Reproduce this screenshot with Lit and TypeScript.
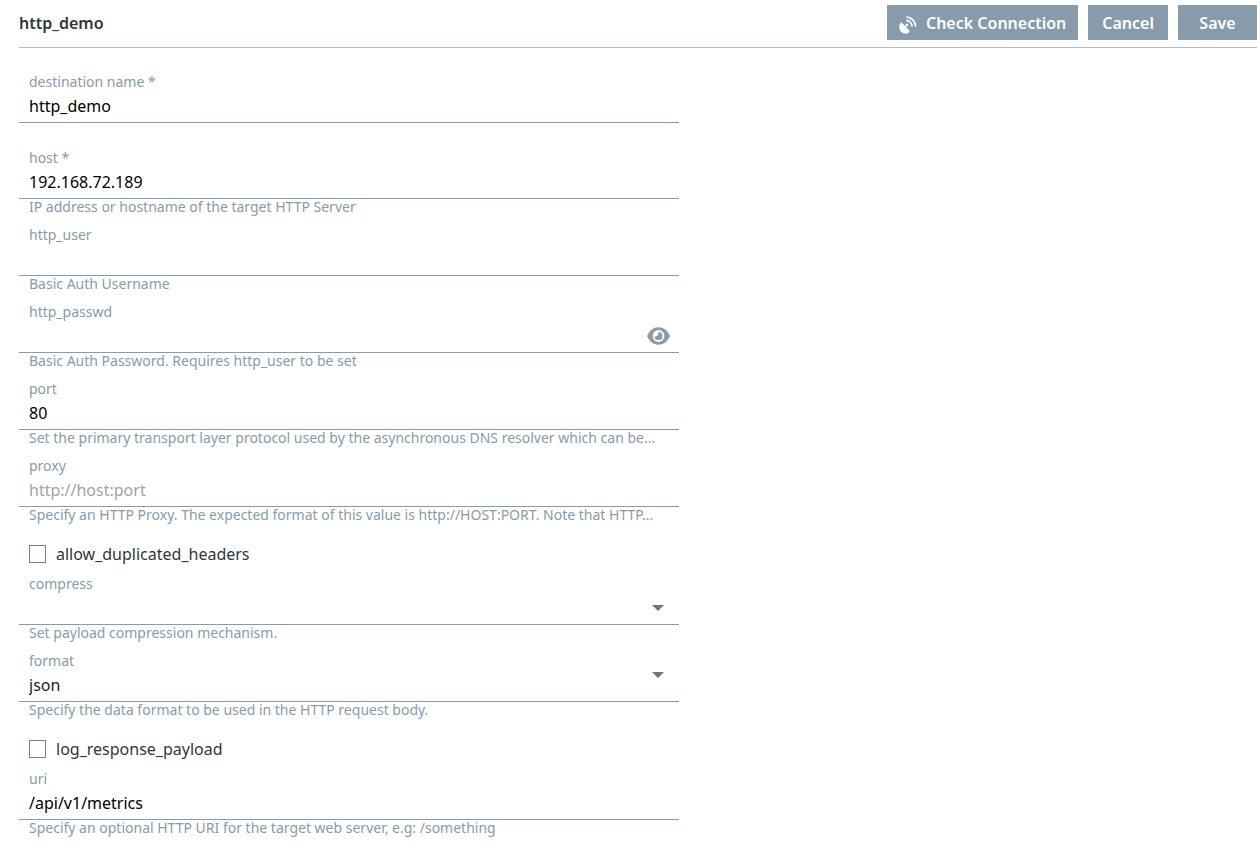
import { LitElement, html, css, svg, nothing } from "lit";
import { customElement, property, state } from "lit/decorators.js";
import { classMap } from "lit/directives/class-map.js";

type FieldKind = "text" | "password" | "select";

@customElement("form-field")
class FormField extends LitElement {
  @property() label = "";
  @property() value = "";
  @property() hint = "";
  @property() placeholder = "";
  @property() kind: FieldKind = "text";
  @property({ type: Array }) options: string[] = [];
  @property({ type: Boolean, attribute: "raised-arrow" }) raisedArrow = false;
  @state() private revealed = false;

  static styles = css`
    :host {
      display: block;
      color: #879baa;
    }
    .label,
    .hint {
      display: block;
      margin: 0;
      padding: 0 10px 2px;
      font-size: 14px;
      line-height: 18px;
      white-space: nowrap;
    }
    .hint {
      line-height: 16px;
      padding-bottom: 11px;
    }
    .spacer {
      height: 26px;
    }
    .control {
      display: grid;
      grid-template-columns: minmax(0, 1fr) auto;
      height: 29px;
      border-bottom: 1px solid #879baa;
    }
    .input {
      grid-area: 1 / 1 / 2 / 3;
      box-sizing: border-box;
      width: 100%;
      height: 100%;
      margin: 0;
      padding: 0 10px 4px;
      border: 0;
      border-radius: 0;
      outline: 0;
      appearance: none;
      background: transparent;
      color: #000;
      font: inherit;
      font-size: 16px;
    }
    .input::placeholder {
      color: #a3a3a3;
      opacity: 1;
    }
    .select {
      color: #1e1e1e;
    }
    .arrow {
      grid-area: 1 / 2;
      align-self: center;
      margin-right: 15px;
      margin-bottom: 3px;
      pointer-events: none;
    }
    .arrow.raised {
      align-self: start;
    }
    .reveal {
      grid-area: 1 / 2;
      align-self: center;
      display: flex;
      margin: 0 8px 3px 0;
      padding: 0;
      border: 0;
      background: none;
      color: inherit;
      cursor: pointer;
    }
  `;

  private renderControl() {
    if (this.kind === "select") {
      return html`
        <select id="control" class="input select">
          ${this.options.map(
            (o) => html`<option ?selected=${o === this.value}>${o}</option>`
          )}
        </select>
        <svg
          class=${classMap({ arrow: true, raised: this.raisedArrow })}
          width="12" height="6" viewBox="0 0 12 6" aria-hidden="true"
        >
          <path d="M0 0h12L6 6z" fill="#757575" />
        </svg>
      `;
    }
    const secret = this.kind === "password";
    return html`
      <input
        id="control"
        class="input"
        type=${secret && !this.revealed ? "password" : "text"}
        .value=${this.value}
        placeholder=${this.placeholder}
      />
      ${secret
        ? html`<button
            class="reveal"
            type="button"
            aria-label="Show password"
            @click=${() => (this.revealed = !this.revealed)}
          >
            <svg width="25" height="20" viewBox="0 0 25 20" aria-hidden="true">
              <path
                d="M1 10C3.500 4.500 7.500 1.300 12.500 1.300S21.500 4.500 24 10C21.500 15.500 17.500 18.700 12.500 18.700S3.500 15.500 1 10z"
                fill="#879baa"
              />
              <circle cx="12.500" cy="10" r="5.900" fill="#fff" />
              <path d="M12.500 6A4 4 0 1 1 8.500 10.200C10.500 11 13 9 12.500 6z" fill="#879baa" />
            </svg>
          </button>`
        : nothing}
    `;
  }

  render() {
    return html`
      <label class="label" for="control">${this.label}</label>
      <div class="control">${this.renderControl()}</div>
      ${this.hint
        ? html`<p class="hint">${this.hint}</p>`
        : html`<div class="spacer"></div>`}
    `;
  }
}

@customElement("check-field")
class CheckField extends LitElement {
  @property() label = "";

  static styles = css`
    :host {
      display: block;
    }
    .row {
      display: flex;
      align-items: center;
      gap: 10px;
      height: 39px;
      padding: 0 10px 2px;
      color: #2d373c;
      font-size: 16px;
    }
    .box {
      appearance: none;
      box-sizing: border-box;
      width: 17px;
      height: 18px;
      margin: 0;
      border: 1px solid #6d8294;
      background: #fff;
    }
    .box:checked {
      background: #879baa;
    }
  `;

  render() {
    return html`<label class="row"
      ><input class="box" type="checkbox" /><span>${this.label}</span></label
    >`;
  }
}

const dishIcon = svg`
  <path d="M2.400 6.300L10.600 14.800C10.400 16.600 8.800 17.700 6.800 17.700C3.200 17.700 0.300 14.800 0.300 11.200C0.300 9 1 7.300 2.400 6.300z" fill="#fff" />
  <path d="M5.800 11.200L8 9" stroke="#fff" stroke-width="1.200" />
  <circle cx="8" cy="9" r="1.300" fill="#fff" />
  <path d="M7.300 4.400a6 6 0 0 1 5.700 6M7.300 1a9.500 9.500 0 0 1 9.300 9.500"
    fill="none" stroke="#fff" stroke-width="1.700" />
`;

@customElement("app-root")
class AppRoot extends LitElement {
  static styles = css`
    :host {
      display: block;
      background: #fff;
      font-family: "Noto Sans", "Open Sans", sans-serif;
    }
    .header {
      display: flex;
      align-items: center;
      justify-content: space-between;
      margin-left: 19px;
      padding: 5px 0 7px;
      border-bottom: 1px solid #aebecb;
    }
    .title {
      margin: 0;
      color: #2d373c;
      font-size: 16px;
      font-weight: 600;
    }
    .actions {
      display: flex;
      gap: 10px;
    }
    .button {
      display: flex;
      align-items: center;
      justify-content: center;
      gap: 9px;
      min-width: 79px;
      height: 35px;
      padding: 0 14px;
      border: 0;
      background: #879baa;
      color: #fff;
      font: inherit;
      font-size: 16px;
      font-weight: 600;
      white-space: nowrap;
      cursor: pointer;
    }
    .button.with-icon {
      padding: 0 12px;
    }
    .button svg {
      margin-top: 4px;
    }
    .form {
      max-width: 660px;
      padding: 25px 19px 0;
    }
  `;

  render() {
    return html`
      <header class="header">
        <h1 class="title">http_demo</h1>
        <div class="actions">
          <button class="button with-icon" type="button">
            <svg width="18" height="18" viewBox="0 0 18 18" aria-hidden="true">${dishIcon}</svg>
            Check Connection
          </button>
          <button class="button" type="button">Cancel</button>
          <button class="button" type="button">Save</button>
        </div>
      </header>
      <form class="form">
        <form-field label="destination name *" value="http_demo"></form-field>
        <form-field
          label="host *"
          value="192.168.72.189"
          hint="IP address or hostname of the target HTTP Server"
        ></form-field>
        <form-field label="http_user" hint="Basic Auth Username"></form-field>
        <form-field
          label="http_passwd"
          kind="password"
          hint="Basic Auth Password. Requires http_user to be set"
        ></form-field>
        <form-field
          label="port"
          value="80"
          hint="Set the primary transport layer protocol used by the asynchronous DNS resolver which can be..."
        ></form-field>
        <form-field
          label="proxy"
          placeholder="http://host:port"
          hint="Specify an HTTP Proxy. The expected format of this value is http://HOST:PORT. Note that HTTP..."
        ></form-field>
        <check-field label="allow_duplicated_headers"></check-field>
        <form-field
          label="compress"
          kind="select"
          .options=${["", "gzip"]}
          hint="Set payload compression mechanism."
        ></form-field>
        <form-field
          label="format"
          kind="select"
          value="json"
          raised-arrow
          .options=${["json", "json_lines", "json_stream", "msgpack", "gelf"]}
          hint="Specify the data format to be used in the HTTP request body."
        ></form-field>
        <check-field label="log_response_payload"></check-field>
        <form-field
          label="uri"
          value="/api/v1/metrics"
          hint="Specify an optional HTTP URI for the target web server, e.g: /something"
        ></form-field>
      </form>
    `;
  }
}
